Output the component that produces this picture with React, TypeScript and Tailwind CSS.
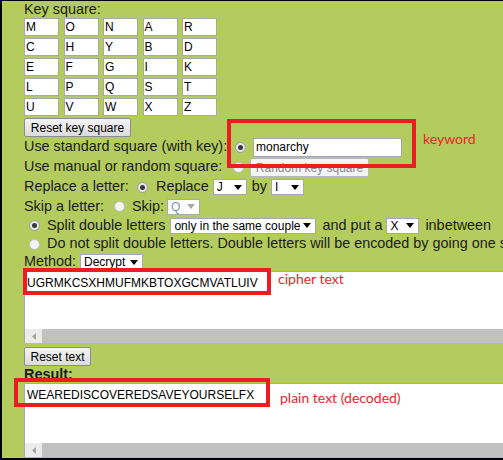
import React from 'react';

const KEY_SQUARE = [
    ['M', 'O', 'N', 'A', 'R'],
    ['C', 'H', 'Y', 'B', 'D'],
    ['E', 'F', 'G', 'I', 'K'],
    ['L', 'P', 'Q', 'S', 'T'],
    ['U', 'V', 'W', 'X', 'Z'],
];

const Radio: React.FC<{ checked?: boolean }> = ({ checked }) => (
    <span
        className={`flex h-[11px] w-[11px] shrink-0 items-center justify-center rounded-full border ${
            checked ? 'border-[#9a9a9a] bg-[#e6e6e6]' : 'border-[#bcbcbc] bg-[#f3f3f3]'
        }`}
    >
        {checked && <span className="h-[5px] w-[5px] rounded-full bg-[#3a3a3a]" />}
    </span>
);

interface SelectProps {
    value: string;
    width: string;
    disabled?: boolean;
}

const Select: React.FC<SelectProps> = ({ value, width, disabled }) => (
    <div
        className={`flex h-[16px] shrink-0 items-center justify-between border border-[#a9a9a9] bg-white pl-[3px] pr-[4px] text-[12px] leading-none ${width}`}
    >
        <span className={disabled ? 'text-[#7b8fb0]' : 'text-black'}>{value}</span>
        <svg width="8" height="5" viewBox="0 0 8 5">
            <path d="M0 0h8L4 5z" fill={disabled ? '#a8a8a8' : '#000'} />
        </svg>
    </div>
);

const Button: React.FC<{ label: string; width: string; disabled?: boolean }> = ({ label, width, disabled }) => (
    <div
        className={`flex h-[19px] shrink-0 items-center justify-center rounded-[2px] border text-[12px] leading-none ${width} ${
            disabled
                ? 'border-[#b8b8b8] bg-[#f4f4f4] text-[#8a8a8a]'
                : 'border-[#8c8c8c] bg-gradient-to-b from-[#f4f4f4] to-[#dcdcdc] text-black'
        }`}
    >
        {label}
    </div>
);

// fake textarea with a windows style horizontal scrollbar
const TextBox: React.FC<{ text: string; height: string }> = ({ text, height }) => (
    <div className={`flex flex-col border-l border-t border-[#a9a9a9] bg-white ${height}`}>
        <div className="flex-1 whitespace-nowrap pl-[2px] pt-[2px] text-[12px] text-black">{text}</div>
        <div className="flex h-[14px]">
            <div className="flex w-[17px] items-center justify-center bg-[#ebebeb]">
                <svg width="4" height="7" viewBox="0 0 4 7">
                    <path d="M4 0v7L0 3.5z" fill="#a3a3a3" />
                </svg>
            </div>
            <div className="flex-1 bg-[#c1c1c1]" />
        </div>
    </div>
);

export default function App() {
    return (
        <div
            className="relative h-[460px] w-[503px] overflow-hidden bg-black pb-[2px] pl-[2px] pt-[1px] text-[14.4px] text-[#1c1c1c]"
            style={{ fontFamily: '"Liberation Sans", Arial, sans-serif' }}
        >
            <div className="flex h-[457px] flex-col overflow-hidden whitespace-nowrap bg-[#b4cb5e] pl-[22px]">
                {/* Key square */}
                <div className="h-[17px] leading-[17px]">Key square:</div>
                <div className="grid grid-cols-[repeat(5,35px)] gap-x-[4.5px] gap-y-[2px]">
                    {KEY_SQUARE.flat().map((ch, i) => (
                        <div
                            key={i}
                            className="h-[18px] border border-[#a9a9a9] bg-white pl-[1px] text-[12px] leading-[16px] text-black"
                        >
                            {ch}
                        </div>
                    ))}
                </div>
                <div className="mt-[2px] flex">
                    <Button label="Reset key square" width="w-[107px]" />
                </div>

                {/* Options */}
                <div className="flex h-[20px] items-center">
                    <span className="w-[211px]">Use standard square (with key):</span>
                    <Radio checked />
                    <div className="ml-[7px] flex h-[19px] w-[149px] items-center border border-[#a9a9a9] bg-white pl-[2px] text-[12px] text-black">
                        monarchy
                    </div>
                </div>
                <div className="flex h-[20px] items-center">
                    <span className="w-[209px]">Use manual or random square:</span>
                    <Radio />
                    <div className="ml-[6px] mt-[1px] flex">
                        <Button label="Random key square" width="w-[119px]" disabled />
                    </div>
                </div>
                <div className="flex h-[20px] items-center">
                    <span className="w-[113px]">Replace a letter:</span>
                    <Radio checked />
                    <span className="ml-[8px]">Replace</span>
                    <span className="ml-[4px]">
                        <Select value="J" width="w-[34px]" />
                    </span>
                    <span className="ml-[5px]">by</span>
                    <span className="ml-[4px]">
                        <Select value="I" width="w-[33px]" />
                    </span>
                </div>
                <div className="flex h-[19px] items-center">
                    <span className="w-[90px]">Skip a letter:</span>
                    <Radio />
                    <span className="ml-[7px]">Skip:</span>
                    <span className="ml-[3px]">
                        <Select value="Q" width="w-[33px]" disabled />
                    </span>
                </div>
                <div className="flex h-[19px] items-center pl-[5px]">
                    <Radio checked />
                    <span className="ml-[7px]">Split double letters</span>
                    <span className="ml-[5px]">
                        <Select value="only in the same couple" width="w-[146px]" />
                    </span>
                    <span className="ml-[6px]">and put a</span>
                    <span className="ml-[4px]">
                        <Select value="X" width="w-[33px]" />
                    </span>
                    <span className="ml-[6px]">inbetween</span>
                </div>
                <div className="flex h-[18px] items-center pl-[5px]">
                    <Radio />
                    <span className="ml-[7px]">
                        Do not split double letters. Double letters will be encoded by going one step further
                    </span>
                </div>
                <div className="flex h-[18px] items-end pb-[1px]">
                    <span className="self-center">Method:</span>
                    <span className="ml-[4px]">
                        <Select value="Decrypt" width="w-[63px]" />
                    </span>
                </div>

                {/* Input text */}
                <TextBox text="UGRMKCSXHMUFMKBTOXGCMVATLUIV" height="h-[72px]" />
                <div className="mt-[4px] flex">
                    <Button label="Reset text" width="w-[67px]" />
                </div>
                <div className="h-[17px] font-bold leading-[17px]">Result:</div>
                <TextBox text="WEAREDISCOVEREDSAVEYOURSELFX" height="h-[74px]" />
            </div>

            {/* Annotations */}
            <div className="absolute left-[227px] top-[119px] h-[49px] w-[189px] border-[4px] border-[#ed1c24]" />
            <div className="absolute left-[23px] top-[268px] h-[27px] w-[248px] border-[4px] border-[#ed1c24]" />
            <div className="absolute left-[14px] top-[378px] h-[29px] w-[256px] border-[4px] border-[#ed1c24]" />
            <div className="absolute left-[423px] top-[132px] text-[14px] leading-[14px] text-[#e8262d]" style={{ fontFamily: 'Lato, sans-serif' }}>
                keyword
            </div>
            <div className="absolute left-[278px] top-[272px] text-[14px] leading-[14px] text-[#e8262d]" style={{ fontFamily: 'Lato, sans-serif' }}>
                cipher text
            </div>
            <div className="absolute left-[280px] top-[391px] text-[14px] leading-[14px] text-[#e8262d]" style={{ fontFamily: 'Lato, sans-serif' }}>
                plain text (decoded)
            </div>
        </div>
    );
}
